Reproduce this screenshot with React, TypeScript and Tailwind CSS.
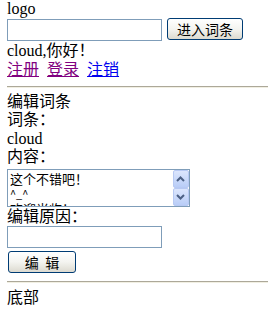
import React from "react";

const font = { fontFamily: '"Liberation Serif", "Noto Sans CJK SC", serif' };

function XpButton({ children, className }: { children: React.ReactNode; className: string }) {
  return (
    <div
      className={`flex items-center justify-center rounded-[3px] border border-[#003c74] bg-gradient-to-b from-[#ffffff] via-[#f4f4f0] to-[#dcdad0] text-[14px] text-black ${className}`}
      style={{ fontFamily: '"Noto Sans CJK SC", sans-serif' }}
    >
      {children}
    </div>
  );
}

function ScrollBtn({ up }: { up: boolean }) {
  return (
    <div className="flex h-[18px] w-[16px] items-center justify-center rounded-[2px] border border-[#b7c9f3] bg-gradient-to-b from-[#dce6fd] to-[#b9cdf7]">
      <svg width="9" height="6" viewBox="0 0 9 6">
        <path
          d={up ? "M1 5 L4.5 1.5 L8 5" : "M1 1 L4.5 4.5 L8 1"}
          fill="none"
          stroke="#4d6185"
          strokeWidth="2"
        />
      </svg>
    </div>
  );
}

export default function App() {
  return (
    <div className="w-[268px] h-[316px] overflow-hidden bg-white text-black text-[16px] pl-[7px]" style={font}>
      <div className="h-[17px] leading-[17px]">logo</div>
      <div className="flex items-start h-[25px] pt-[1px]">
        <div className="mt-[1px] h-[22px] w-[155px] border border-[#7f9db9] bg-white" />
        <XpButton className="ml-[5px] h-[22px] w-[76px]">进入词条</XpButton>
      </div>
      <div className="h-[18px] leading-[18px]">cloud,你好！</div>
      <div className="h-[19px] leading-[19px] flex gap-[8px]">
        <span className="underline text-[#800080]">注册</span>
        <span className="underline text-[#800080]">登录</span>
        <span className="underline text-[#0000ee]">注销</span>
      </div>
      <div className="mt-[7px] h-[2px] border-t border-t-[#aca899] border-b border-b-[#f1efe2]" />
      <div className="mt-[5px] h-[18px] leading-[18px]">编辑词条</div>
      <div className="h-[18px] leading-[18px]">词条：</div>
      <div className="h-[19px] leading-[19px]">cloud</div>
      <div className="h-[18px] leading-[18px]">内容：</div>
      <div className="mt-[3px] flex h-[38px] w-[183px] border border-[#7f9db9] bg-white">
        <div
          className="flex-1 overflow-hidden pl-[2px] pt-[1px] text-[13px] leading-[15px]"
          style={{ fontFamily: '"Noto Sans CJK SC", sans-serif' }}
        >
          <div>这个不错吧！</div>
          <div className="text-[11px]">^_^</div>
          <div>欢迎光临！</div>
        </div>
        <div className="flex w-[17px] flex-col items-center pt-[0px]">
          <ScrollBtn up />
          <ScrollBtn up={false} />
        </div>
      </div>
      <div className="h-[19px] leading-[19px]">编辑原因：</div>
      <div className="h-[22px] w-[155px] border border-[#7f9db9] bg-white" />
      <XpButton className="ml-[1px] mt-[3px] h-[22px] w-[68px]">编&nbsp;&nbsp;辑</XpButton>
      <div className="mt-[8px] h-[2px] border-t border-t-[#aca899] border-b border-b-[#f1efe2]" />
      <div className="mt-[6px] h-[18px] leading-[18px]">底部</div>
    </div>
  );
}
